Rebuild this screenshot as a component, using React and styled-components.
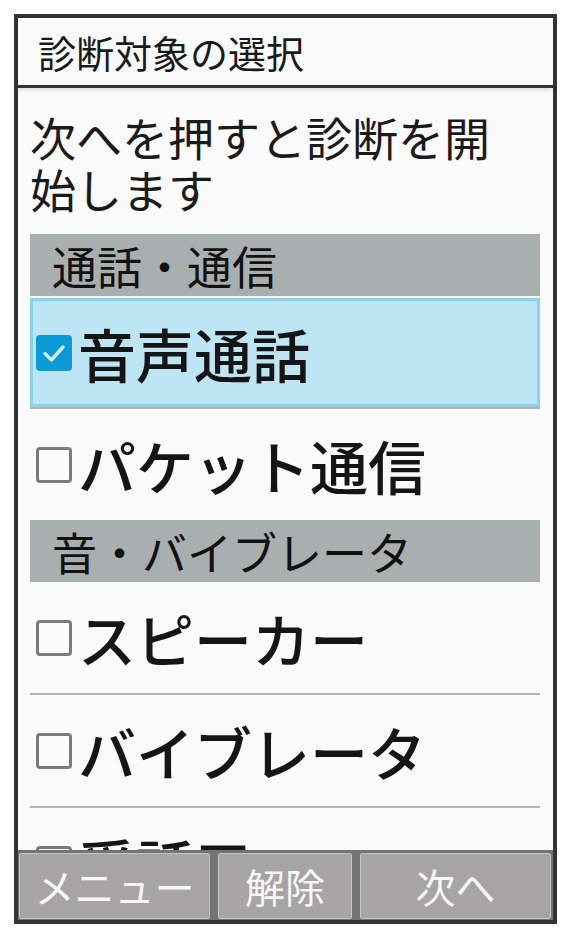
import React from "react";
import styled, { createGlobalStyle } from "styled-components";

const GlobalStyle = createGlobalStyle`
  html, body {
    margin: 0;
    padding: 0;
    background: #ffffff;
  }
  body {
    font-family: "Noto Sans CJK JP", "Noto Sans", sans-serif;
  }
`;

const Page = styled.div`
  width: 571px;
  height: 938px;
  padding: 14px 0 0 14px;
  box-sizing: border-box;
`;

const Frame = styled.div`
  width: 543px;
  height: 910px;
  box-sizing: border-box;
  border: 4px solid #333333;
  background: #fafafa;
  display: flex;
  flex-direction: column;
  overflow: hidden;
`;

const TitleBar = styled.div`
  height: 67px;
  flex: none;
  display: flex;
  align-items: center;
  padding-left: 20px;
  border-bottom: 3px solid #333333;
  box-shadow: 0 2px 5px rgba(0, 0, 0, 0.12);
  font-size: 38px;
  color: #1a1a1a;
  position: relative;
  z-index: 1;
`;

const Content = styled.div`
  flex: 1;
  overflow: hidden;
  padding: 0 13px 0 12px;
`;

const Intro = styled.p`
  margin: 22px 0 20px;
  max-width: 480px;
  font-size: 46px;
  line-height: 52px;
  color: #1a1a1a;
`;

const SectionHeader = styled.div`
  height: 62px;
  display: flex;
  align-items: center;
  padding-left: 22px;
  background: #a9aeae;
  font-size: 45px;
  color: #111111;
`;

const Row = styled.div`
  height: ${(p) => (p.$selected ? "109px" : "111px")};
  margin-top: ${(p) => (p.$selected ? "2px" : "0")};
  display: flex;
  align-items: center;
  padding-left: 6px;
  gap: 6px;
  font-size: 58px;
  font-weight: 500;
  color: #151515;
  background: ${(p) => (p.$selected ? "#bee5f4" : "transparent")};
  box-shadow: ${(p) => (p.$selected ? "inset 0 0 0 3px #8ad2ee" : "none")};
  border-bottom: ${(p) => (p.$divider ? "2px solid #b3b3b3" : "none")};
`;

const Box = styled.span`
  flex: none;
  width: 36px;
  height: 36px;
  box-sizing: border-box;
  border-radius: 4px;
  border: ${(p) => (p.$checked ? "none" : "3px solid #7b7b7b")};
  background: ${(p) => (p.$checked ? "#0b9ad6" : "transparent")};
  display: flex;
  align-items: center;
  justify-content: center;
`;

const Label = styled.span`
  line-height: 1;
  white-space: nowrap;
`;

const SoftKeys = styled.div`
  flex: none;
  height: 70px;
  box-sizing: border-box;
  background: #747474;
  padding: 3px 2px 1px 1px;
  display: flex;
  gap: 8px;
`;

const SoftKey = styled.div`
  width: ${(p) => p.$w}px;
  flex: none;
  box-sizing: border-box;
  background: #a6a4a4;
  border: 1px solid #c4c4c4;
  border-radius: 2px;
  display: flex;
  align-items: center;
  justify-content: center;
  font-size: 40px;
  color: #f7f7f7;
  white-space: nowrap;
`;

const Check = () => (
  <svg width="26" height="22" viewBox="0 0 26 22">
    <path
      d="M4 11.5 L10.5 18 L22 5"
      fill="none"
      stroke="#cdeefa"
      strokeWidth="3.4"
      strokeLinecap="round"
      strokeLinejoin="round"
    />
  </svg>
);

const Item = ({ label, checked, selected, divider }) => (
  <Row $selected={selected} $divider={divider}>
    <Box $checked={checked}>{checked && <Check />}</Box>
    <Label>{label}</Label>
  </Row>
);

export default function App() {
  return (
    <Page>
      <GlobalStyle />
      <Frame>
        <TitleBar>診断対象の選択</TitleBar>
        <Content>
          <Intro>次へを押すと診断を開始します</Intro>
          <SectionHeader>通話・通信</SectionHeader>
          <Item label="音声通話" checked selected divider />
          <Item label="パケット通信" />
          <SectionHeader>音・バイブレータ</SectionHeader>
          <Item label="スピーカー" divider />
          <Item label="バイブレータ" divider />
          <Item label="受話口" divider />
        </Content>
        <SoftKeys>
          <SoftKey $w={191}>メニュー</SoftKey>
          <SoftKey $w={134}>解除</SoftKey>
          <SoftKey $w={191}>次へ</SoftKey>
        </SoftKeys>
      </Frame>
    </Page>
  );
}
